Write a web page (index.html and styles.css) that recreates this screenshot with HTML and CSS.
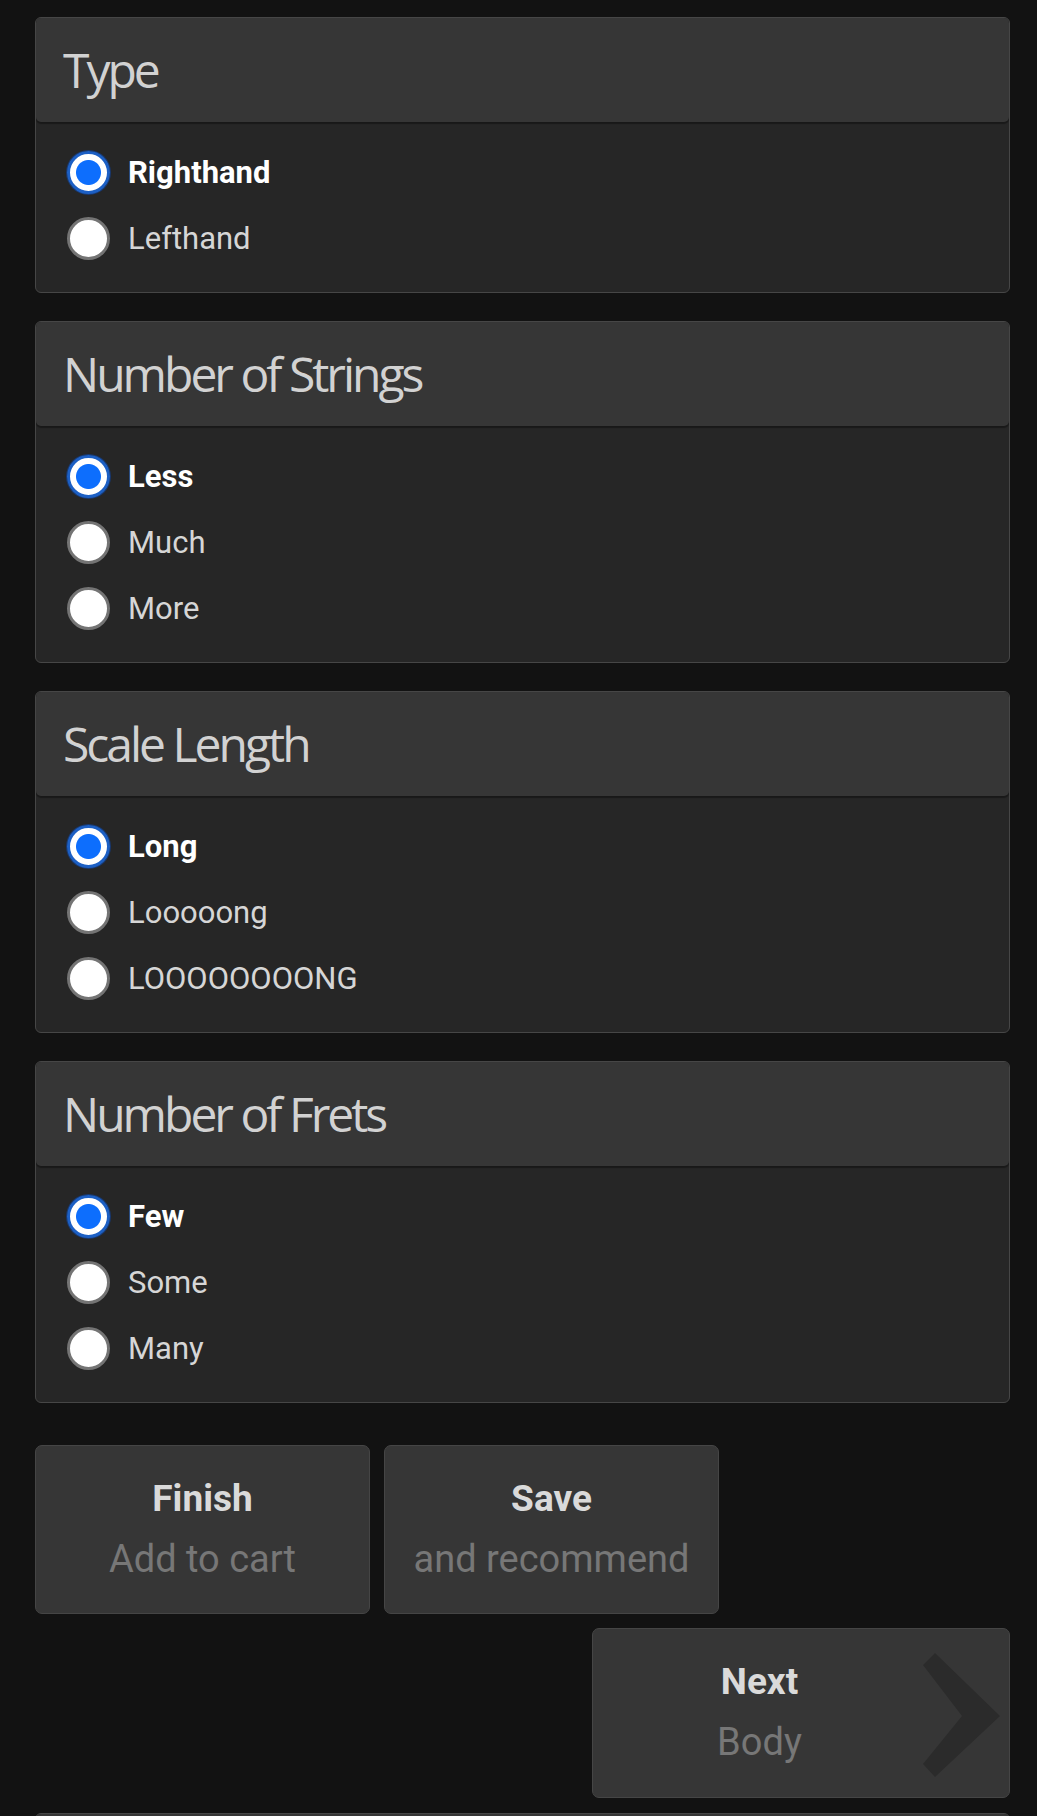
FILE: index.html
```html
<!DOCTYPE html>
<html lang="en">
<head>
<meta charset="utf-8">
<title>Configurator</title>
<link rel="stylesheet" href="styles.css">
</head>
<body>
<main class="page">
  <section class="card">
    <header class="card-header"><h2 class="card-title">Type</h2></header>
    <div class="card-body">
      <label class="opt is-checked"><span class="radio radio-on"></span><span class="opt-label">Righthand</span></label>
      <label class="opt"><span class="radio"></span><span class="opt-label">Lefthand</span></label>
    </div>
  </section>

  <section class="card">
    <header class="card-header"><h2 class="card-title">Number of Strings</h2></header>
    <div class="card-body">
      <label class="opt is-checked"><span class="radio radio-on"></span><span class="opt-label">Less</span></label>
      <label class="opt"><span class="radio"></span><span class="opt-label">Much</span></label>
      <label class="opt"><span class="radio"></span><span class="opt-label">More</span></label>
    </div>
  </section>

  <section class="card">
    <header class="card-header"><h2 class="card-title">Scale Length</h2></header>
    <div class="card-body">
      <label class="opt is-checked"><span class="radio radio-on"></span><span class="opt-label">Long</span></label>
      <label class="opt"><span class="radio"></span><span class="opt-label">Looooong</span></label>
      <label class="opt"><span class="radio"></span><span class="opt-label">LOOOOOOOONG</span></label>
    </div>
  </section>

  <section class="card">
    <header class="card-header"><h2 class="card-title">Number of Frets</h2></header>
    <div class="card-body">
      <label class="opt is-checked"><span class="radio radio-on"></span><span class="opt-label">Few</span></label>
      <label class="opt"><span class="radio"></span><span class="opt-label">Some</span></label>
      <label class="opt"><span class="radio"></span><span class="opt-label">Many</span></label>
    </div>
  </section>

  <div class="actions">
    <button class="btn btn-small" type="button">
      <span class="btn-text"><span class="btn-title">Finish</span><span class="btn-sub">Add to cart</span></span>
    </button>
    <button class="btn btn-small" type="button">
      <span class="btn-text"><span class="btn-title">Save</span><span class="btn-sub">and recommend</span></span>
    </button>
    <button class="btn btn-next" type="button">
      <span class="btn-text"><span class="btn-title">Next</span><span class="btn-sub">Body</span></span>
      <svg class="chevron" width="83" height="168" viewBox="0 0 83 168" overflow="visible" aria-hidden="true">
        <polygon points="9,24 74,87 9,148 -3,135 36,87 -3,36" fill="#2b2b2b"/>
      </svg>
    </button>
  </div>

  <section class="card card-tail">
    <header class="card-header"></header>
  </section>
</main>
</body>
</html>
```

FILE: styles.css
```css
html, body {
  margin: 0;
  padding: 0;
  background: #121212;
}

body {
  font-family: Roboto, "Liberation Sans", sans-serif;
  color: #dcdcdc;
}

.page {
  display: flex;
  flex-direction: column;
  width: 975px;
  padding: 17px 0 0 35px;
}

.card {
  border: 1px solid #464646;
  border-radius: 6px;
  background: #262626;
  margin-bottom: 28px;
  overflow: hidden;
}

.card-header {
  height: 104px;
  box-sizing: border-box;
  padding: 19px 27px;
  background: #363636;
  border-radius: 5px;
  box-shadow: 0 2px 1px rgba(0, 0, 0, 0.35);
}

.card-title {
  margin: 0;
  font-family: "Open Sans", "Liberation Sans", sans-serif;
  font-weight: 400;
  font-size: 48px;
  line-height: 66px;
  letter-spacing: -3px;
  color: #d2d2d2;
}

.card-body {
  display: flex;
  flex-direction: column;
  padding: 17px 31px 21px;
}

.opt {
  display: flex;
  align-items: center;
  gap: 18px;
  height: 66px;
  font-size: 31px;
  color: #d6d6d6;
}

.opt.is-checked {
  font-weight: 700;
  color: #ffffff;
}

.radio {
  flex: none;
  width: 43px;
  height: 43px;
  box-sizing: border-box;
  border-radius: 50%;
  background: #ffffff;
  border: 3px solid #747474;
}

.radio-on {
  border: 3px solid #1c5fc4;
  background: radial-gradient(circle, #0d6efd 0, #0d6efd 12px, #ffffff 13px);
  box-shadow: 0 0 0 1px rgba(20, 60, 130, 0.8);
}

.actions {
  display: flex;
  flex-wrap: wrap;
  gap: 14px;
  margin: 14px 0 15px;
}

.btn {
  display: flex;
  align-items: stretch;
  box-sizing: border-box;
  padding: 0;
  border: 1px solid #454545;
  border-radius: 7px;
  background: #363636;
  font-family: Roboto, "Liberation Sans", sans-serif;
  cursor: pointer;
}

.btn-small {
  width: 335px;
  height: 169px;
}

.btn-next {
  width: 418px;
  height: 170px;
  margin-left: auto;
}

.btn-text {
  flex: 1;
  display: flex;
  flex-direction: column;
  align-items: center;
  padding-top: 31px;
}

.btn-title {
  font-size: 37px;
  line-height: 43px;
  font-weight: 700;
  color: #dadada;
}

.btn-sub {
  margin-top: 18px;
  font-size: 38px;
  line-height: 43px;
  font-weight: 400;
  color: #777777;
}

.chevron {
  flex: none;
  display: block;
}

.card-tail {
  margin-bottom: 0;
  height: 200px;
}
```
